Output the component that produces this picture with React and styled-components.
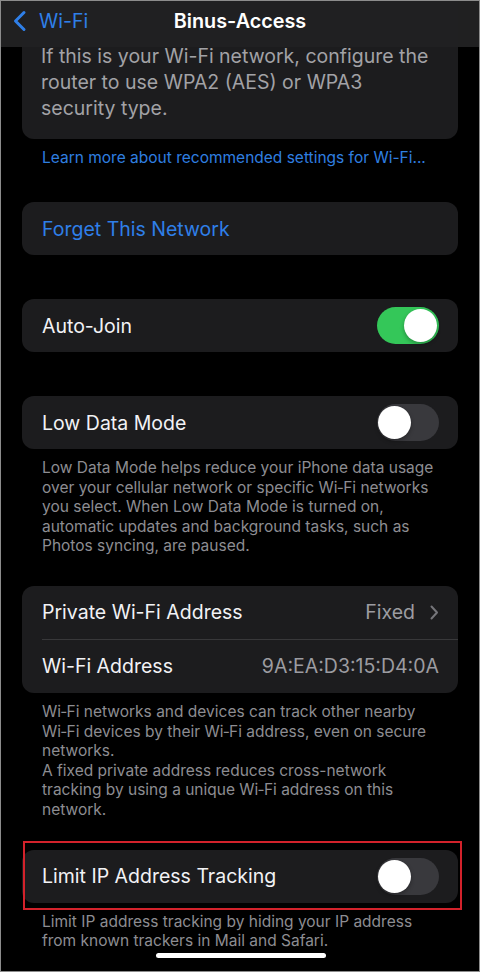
import React from "react";
import styled, { createGlobalStyle } from "styled-components";

const GlobalStyle = createGlobalStyle`
  * { box-sizing: border-box; }
  body {
    margin: 0;
    background: #000000;
    font-family: Inter, "Noto Sans", "Liberation Sans", sans-serif;
    -webkit-font-smoothing: antialiased;
  }
`;

export default function App() {
  return (
    <>
      <GlobalStyle />
      <Screen>
        <NavBar>
          <BackButton>
            <svg width="16" height="22" viewBox="0 0 16 22">
              <path d="M12 2.5 L3.5 11 L12 19.5" fill="none" stroke="#2f7fe8" strokeWidth="3" strokeLinecap="round" strokeLinejoin="round" />
            </svg>
            <span>Wi-Fi</span>
          </BackButton>
          <Title>Binus-Access</Title>
        </NavBar>

        <Content>
          <InfoCard>
            If this is your Wi-Fi network, configure the router to use WPA2 (AES) or WPA3 security type.
          </InfoCard>
          <LinkNote>Learn more about recommended settings for Wi-Fi...</LinkNote>

          <Group $top={34}>
            <Row>
              <ActionLabel>Forget This Network</ActionLabel>
            </Row>
          </Group>

          <Group $top={44}>
            <Row>
              <Label>Auto-Join</Label>
              <Toggle $on />
            </Row>
          </Group>

          <Group $top={44}>
            <Row>
              <Label>Low Data Mode</Label>
              <Toggle />
            </Row>
          </Group>
          <Footer>
            Low Data Mode helps reduce your iPhone data usage over your cellular network or specific Wi&#8209;Fi networks you select. When Low Data Mode is turned on, automatic updates and background tasks, such as Photos syncing, are paused.
          </Footer>

          <Group $top={30}>
            <Row>
              <Label>Private Wi-Fi Address</Label>
              <Value>
                Fixed
                <svg width="9" height="15" viewBox="0 0 9 15">
                  <path d="M1.5 1.5 L7 7.5 L1.5 13.5" fill="none" stroke="#75757a" strokeWidth="2" strokeLinecap="round" strokeLinejoin="round" />
                </svg>
              </Value>
            </Row>
            <Divider />
            <Row>
              <Label>Wi-Fi Address</Label>
              <Value>9A:EA:D3:15:D4:0A</Value>
            </Row>
          </Group>
          <Footer>
            Wi&#8209;Fi networks and devices can track other nearby Wi&#8209;Fi devices by their Wi&#8209;Fi address, even on secure networks.
            <br />
            A fixed private address reduces cross-network tracking by using a unique Wi&#8209;Fi address on this network.
          </Footer>

          <Highlight>
            <Group $top={0}>
              <Row>
                <Label>Limit IP Address Tracking</Label>
                <Toggle />
              </Row>
            </Group>
          </Highlight>
          <Footer>
            Limit IP address tracking by hiding your IP address from known trackers in Mail and Safari.
          </Footer>
        </Content>

        <HomeIndicator />
      </Screen>
    </>
  );
}

const Screen = styled.div`
  position: relative;
  width: 480px;
  height: 972px;
  overflow: hidden;
  background: #000000;
  border: 1px solid #8c8c8c;
`;

const NavBar = styled.div`
  position: absolute;
  top: 0;
  left: 0;
  right: 0;
  height: 46px;
  z-index: 2;
  background: rgba(33, 33, 34, 0.97);
  display: flex;
  align-items: center;
  justify-content: center;
  padding-bottom: 6px;
`;

const BackButton = styled.div`
  position: absolute;
  left: 11px;
  top: 9px;
  display: flex;
  align-items: center;
  gap: 11px;
  color: #2f7fe8;
  font-size: 19.5px;
  span {
    line-height: 22px;
  }
`;

const Title = styled.div`
  color: #ffffff;
  font-size: 19.8px;
  font-weight: 600;
`;

const Content = styled.div`
  padding: 0 21px;
`;

const InfoCard = styled.div`
  background: #1c1c1e;
  border-radius: 0 0 12px 12px;
  padding: 42px 19px 18px 19px;
  color: #a2a2a6;
  font-size: 19.5px;
  line-height: 26px;
`;

const LinkNote = styled.div`
  margin-top: 9px;
  padding: 0 20px;
  color: #2f7fe0;
  font-size: 15.5px;
  line-height: 20px;
  white-space: nowrap;
`;

const Group = styled.div`
  margin-top: ${(p) => p.$top}px;
  background: #1c1c1e;
  border-radius: 12px;
  overflow: hidden;
`;

const Row = styled.div`
  height: 53px;
  display: flex;
  align-items: center;
  justify-content: space-between;
  padding: 0 19px 0 20px;
`;

const Label = styled.div`
  color: #f2f2f5;
  font-size: 19.5px;
`;

const ActionLabel = styled(Label)`
  color: #2f7fe8;
`;

const Value = styled.div`
  display: flex;
  align-items: center;
  gap: 15px;
  color: #9c9ca1;
  font-size: 19.5px;
`;

const Divider = styled.div`
  height: 1px;
  margin-left: 20px;
  background: #38383a;
`;

const Toggle = styled.div`
  position: relative;
  width: 62px;
  height: 37px;
  border-radius: 19px;
  background: ${(p) => (p.$on ? "#34c759" : "#39393d")};
  flex-shrink: 0;
  &::after {
    content: "";
    position: absolute;
    top: 2px;
    left: ${(p) => (p.$on ? "27px" : "1px")};
    width: 33px;
    height: 33px;
    border-radius: 50%;
    background: #ffffff;
    box-shadow: 0 2px 4px rgba(0, 0, 0, 0.3);
  }
`;

const Footer = styled.div`
  margin-top: 9px;
  padding: 0 20px;
  color: #8d8d92;
  font-size: 15.5px;
  line-height: 19.6px;
`;

/* red annotation frame drawn over the row */
const Highlight = styled.div`
  position: relative;
  margin-top: 30px;
  &::after {
    content: "";
    position: absolute;
    top: -9px;
    left: 1px;
    right: -4px;
    bottom: -7px;
    border: 2px solid #d3222b;
    pointer-events: none;
  }
`;

const HomeIndicator = styled.div`
  position: absolute;
  left: 155px;
  bottom: 13px;
  width: 170px;
  height: 5px;
  border-radius: 3px;
  background: #ffffff;
`;
